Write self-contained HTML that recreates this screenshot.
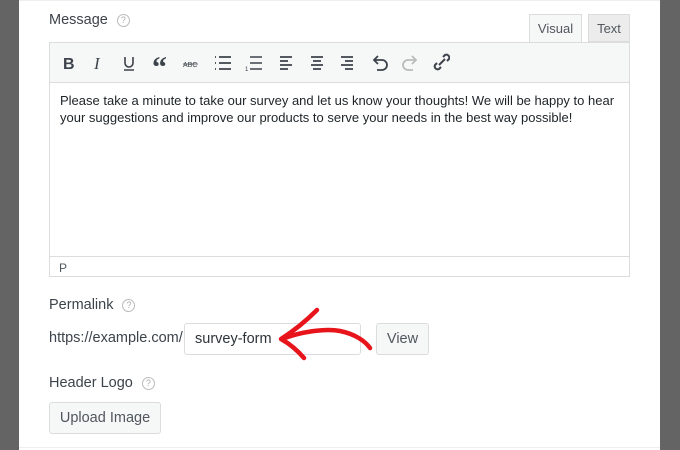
<!DOCTYPE html>
<html><head><style>
body{margin:0;width:680px;height:449px;background:#646464;position:relative;font-family:"Liberation Sans",sans-serif;color:#2c3338;overflow:hidden}
.panel{position:absolute;left:19px;top:0;width:641px;height:449px;background:#fff;border-top:1px solid #eee}
.a{position:absolute}
.lbl{font-size:14.5px;color:#3c434a}
.q{display:inline-block;width:11px;height:11px;border:1px solid #bbb;border-radius:50%;font-size:9px;line-height:11px;text-align:center;color:#aaa;margin-left:9px;vertical-align:1px}
.btn{background:#f6f7f7;border:1px solid #dcdcde;border-radius:3px;color:#50575e;font-size:14.5px;text-align:center;box-sizing:border-box}
</style></head><body>
<div class="panel"></div>
<div class="a lbl" style="left:49px;top:12px">Message<span class="q">?</span></div>
<div class="a" style="left:529px;top:14px;width:53px;height:29px;background:#f6f7f7;border:1px solid #dcdcde;border-bottom:none;box-sizing:border-box;font-size:13px;color:#50575e;text-align:center;line-height:28px">Visual</div>
<div class="a" style="left:588px;top:14px;width:42px;height:28px;background:#ececec;border:1px solid #dcdcde;box-sizing:border-box;font-size:13px;color:#50575e;text-align:center;line-height:27px">Text</div>
<div class="a" style="left:49px;top:42px;width:581px;height:235px;border:1px solid #dcdcde;box-sizing:border-box">
 <div class="a" style="left:0;top:0;width:579px;height:39px;background:#f6f7f7;border-bottom:1px solid #dcdcde">
  <svg width="400" height="39" style="position:absolute;left:0;top:0" fill="none" stroke="#3c434a" stroke-width="1.6">
   <text x="13" y="26" font-family="Liberation Sans" font-weight="bold" font-size="16" fill="#3c434a" stroke="none">B</text>
   <text x="44" y="26" font-family="Liberation Serif" font-style="italic" font-size="17" fill="#3c434a" stroke="none">I</text>
   <path d="M75 14v6a4 4 0 0 0 8 0v-6M74 27h10"/>
   <text x="102" y="34" font-family="Liberation Serif" font-weight="bold" font-size="30" fill="#3c434a" stroke="none">“</text>
   <text x="133" y="24" font-family="Liberation Sans" font-size="7" fill="#3c434a" stroke="none">ABC</text>
   <path d="M133 21h15" stroke-width="0.8"/>
   <path d="M169 14h12M169 20h12M169 26h12M165 14h1M165 20h1M165 26h1" stroke-width="1.8"/>
   <path d="M200 14h12M200 20h12M200 26h12" /><text x="195" y="28" font-size="6" fill="#3c434a" stroke="none">1</text>
   <path d="M230 14h12M230 18h8M230 22h12M230 26h8" stroke-width="1.8"/>
   <path d="M261 14h12M263 18h8M261 22h12M263 26h8" stroke-width="1.8"/>
   <path d="M291 14h12M295 18h8M291 22h12M295 26h8" stroke-width="1.8"/>
   <path d="M325 17h7a5 5 0 0 1 0 10h-5M328 13l-4 4 4 4" stroke-width="1.8"/>
   <path d="M365 17h-7a5 5 0 0 0 0 10h5M362 13l4 4-4 4" stroke="#bbb" stroke-width="1.8"/>
   <path d="M389 22l6-6M387 20l-2 2a3 3 0 0 0 4 4l2-2M397 18l2-2a3 3 0 0 0-4-4l-2 2" stroke-width="2"/>
  </svg>
 </div>
 <div class="a" style="left:10px;top:49px;font-size:13px;line-height:17px;color:#1d2327;width:565px">Please take a minute to take our survey and let us know your thoughts! We will be happy to hear your suggestions and improve our products to serve your needs in the best way possible!</div>
 <div class="a" style="left:0;top:213px;width:579px;height:20px;border-top:1px solid #dcdcde;font-size:12px;color:#50575e"><span style="position:absolute;left:9px;top:4px">P</span></div>
</div>
<div class="a lbl" style="left:49px;top:297px">Permalink<span class="q">?</span></div>
<div class="a" style="left:49px;top:330px;font-size:14.5px;color:#3c434a">https://example.com/</div>
<div class="a" style="left:184px;top:323px;width:177px;height:32px;border:1px solid #dcdcde;border-radius:3px;box-sizing:border-box;font-size:14.5px;line-height:30px;padding-left:10px;color:#2c3338">survey-form</div>
<div class="a btn" style="left:376px;top:323px;width:53px;height:32px;line-height:30px">View</div>
<div class="a lbl" style="left:49px;top:375px">Header Logo<span class="q">?</span></div>
<div class="a btn" style="left:49px;top:402px;width:112px;height:32px;line-height:30px">Upload Image</div>
<div class="a" style="left:19px;top:447px;width:641px;height:1px;background:#eee"></div>
<svg class="a" style="left:270px;top:300px" width="110" height="70" fill="none" stroke="#e8141b" stroke-linecap="round" stroke-linejoin="round" stroke-width="4.5">
 <path d="M12 39C30 32 55 28 70 31C85 34 95 41 100 48"/>
 <path d="M47 10C35 22 22 32 11 39C20 44 28 51 34 58"/>
</svg>
</body></html>
